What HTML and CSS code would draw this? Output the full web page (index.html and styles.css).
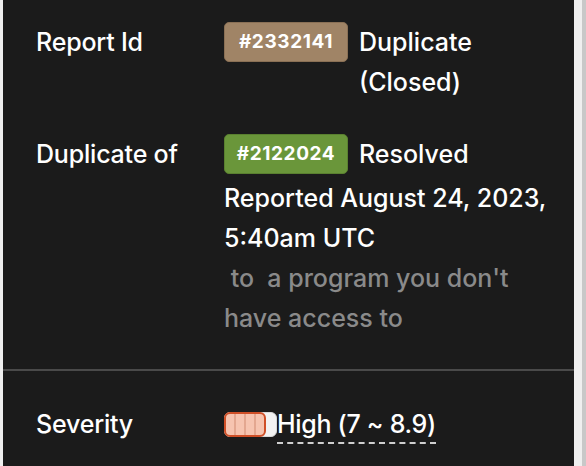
FILE: index.html
```html
<!DOCTYPE html>
<html lang="en">
<head>
    <meta charset="UTF-8">
    <title>Report Details</title>
    <link rel="stylesheet" href="styles.css">
</head>
<body>
    <div class="panel">
        <div class="details">
            <div class="row">
                <div class="label">Report Id</div>
                <div class="value">
                    <div class="ref">
                        <span class="badge badge-duplicate">#2332141</span>
                        <span class="ref-text">Duplicate (Closed)</span>
                    </div>
                </div>
            </div>

            <div class="row">
                <div class="label">Duplicate of</div>
                <div class="value">
                    <div class="ref">
                        <span class="badge badge-resolved">#2122024</span>
                        <span class="ref-text">Resolved</span>
                    </div>
                    <div class="reported">Reported August 24, 2023, 5:40am UTC</div>
                    <div class="muted">&nbsp;to &nbsp;a program you don't have access to</div>
                </div>
            </div>
        </div>

        <hr class="divider">

        <div class="details">
            <div class="row">
                <div class="label">Severity</div>
                <div class="value severity">
                    <span class="meter">
                        <span class="meter-fill">
                            <i></i><i></i><i></i><i></i>
                        </span>
                    </span>
                    <span class="severity-text">High (7 ~ 8.9)</span>
                </div>
            </div>
        </div>
    </div>
    <div class="track"></div>
    <div class="scroll"></div>
</body>
</html>
```

FILE: styles.css
```css
body {
    margin: 0;
    padding-left: 3px;
    height: 466px;
    display: flex;
    background-color: #efefef;
    font-family: Inter, "Noto Sans", sans-serif;
    color: #fff;
    overflow: hidden;
}

.panel {
    width: 571px;
    background-color: #1b1b1b;
    padding-top: 22px;
}

.track {
    width: 8px;
}

.scroll {
    width: 4px;
    background-color: #c8c8c8;
}

.details {
    display: flex;
    flex-direction: column;
    gap: 32px;
}

.row {
    display: grid;
    grid-template-columns: 221px 1fr;
    font-size: 25px;
    font-weight: 500;
    line-height: 40px;
}

.label {
    padding-left: 33px;
    letter-spacing: -0.2px;
}

.value {
    padding-right: 20px;
}

.ref {
    display: flex;
    align-items: flex-start;
    gap: 11px;
}

.reported {
    margin-top: 4px;
}

.badge {
    flex-shrink: 0;
    box-sizing: border-box;
    height: 40px;
    width: 124px;
    text-align: center;
    border: 1px solid;
    border-radius: 5px;
    font-size: 19px;
    font-weight: 700;
    line-height: 38px;
    letter-spacing: 0.6px;
}

.badge-duplicate {
    background-color: #a08466;
    border-color: #8a7055;
}

.badge-resolved {
    background-color: #6a963a;
    border-color: #5a8030;
}

.muted {
    color: #8a8a8a;
}

.divider {
    border: none;
    border-top: 2px solid #4a4a4a;
    margin: 31px 0 33px;
}

.severity {
    display: flex;
    align-items: center;
}

.meter {
    display: flex;
    box-sizing: border-box;
    width: 53px;
    height: 25px;
    border-radius: 6px;
    background-color: #f2f2f2;
    border: 1px solid #d8d8d8;
}

.meter-fill {
    display: flex;
    box-sizing: border-box;
    width: 42px;
    margin: -1px 0 -1px -1px;
    border: 2px solid #cf4f27;
    border-radius: 6px;
    background-color: #f6c4b0;
    overflow: hidden;
}

.meter-fill i {
    flex: 1;
    border-right: 2px solid #e3a790;
}

.meter-fill i:last-child {
    border-right: none;
}

.severity-text {
    border-bottom: 2px dashed #cfcfcf;
    line-height: 36px;
    margin-top: 2px;
    letter-spacing: -0.3px;
}
```
